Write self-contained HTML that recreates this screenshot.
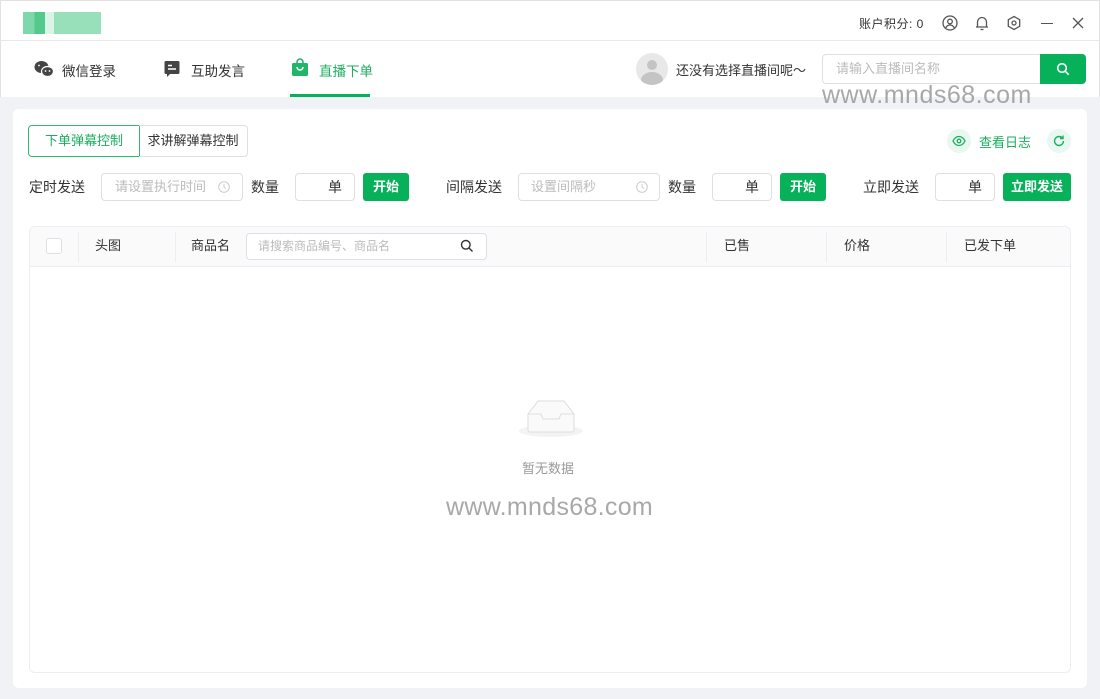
<!DOCTYPE html>
<html><head><meta charset="utf-8"><style>
*{box-sizing:border-box;margin:0;padding:0}
body{width:1100px;height:699px;overflow:hidden;font-family:"Liberation Sans","Noto Sans CJK SC",sans-serif;font-size:13px;color:#333;background:#f0f2f5;position:relative}
.abs{position:absolute}
.top{left:0;top:0;width:1100px;height:41px;background:#fff;border:1px solid #e2e2e2;border-bottom:1px solid #e8e8e8}
.nav{left:0;top:41px;width:1100px;height:56px;background:#fff;border-left:1px solid #e2e2e2;border-right:1px solid #e2e2e2}
.card{left:13px;top:109px;width:1074px;height:579px;background:#fff;border-radius:6px}
.inp{position:absolute;border:1px solid #dcdfe6;border-radius:4px;background:#fff;color:#bbb;font-size:13px;line-height:26px;height:28px}
.btn{position:absolute;background:#07b15a;color:#fff;border-radius:3px;font-weight:bold;font-size:13px;text-align:center;line-height:28px;height:28px}
.lbl{position:absolute;font-size:14px;color:#333;line-height:28px}
.th{position:absolute;top:9px;line-height:20px}
</style></head><body>
<div class="abs top">
 <div class="abs" style="left:22px;top:11px;width:78px;height:22px;background:linear-gradient(90deg,#6fd3a0 0 15%,#3ec47e 15% 28%,#d8f2e4 28% 40%,#8cdcb3 40% 100%);opacity:.9"></div>
 <div class="abs" style="left:858px;top:14px;font-size:12px;color:#333;letter-spacing:.5px">账户积分: 0</div>
 <svg class="abs" style="left:941px;top:14px" width="16" height="16" viewBox="0 0 16 16" fill="none" stroke="#555" stroke-width="1.3"><circle cx="8" cy="8" r="7"/><circle cx="8" cy="6.5" r="2.3"/><path d="M3.8 12.8c1-2 2.5-2.8 4.2-2.8s3.2.8 4.2 2.8"/></svg>
 <svg class="abs" style="left:973px;top:14px" width="16" height="16" viewBox="0 0 16 16" fill="none" stroke="#555" stroke-width="1.3"><path d="M3.5 12V7a4.5 4.5 0 019 0v5M2 12h12M6.5 14.5h3"/></svg>
 <svg class="abs" style="left:1005px;top:14px" width="16" height="16" viewBox="0 0 16 16" fill="none" stroke="#555" stroke-width="1.3"><path d="M8 1.5l5.7 3.2v6.6L8 14.5 2.3 11.3V4.7z"/><circle cx="8" cy="8" r="2"/></svg>
 <div class="abs" style="left:1040px;top:22px;width:12px;height:1.3px;background:#555"></div>
 <svg class="abs" style="left:1071px;top:16px" width="12" height="12" viewBox="0 0 12 12" stroke="#555" stroke-width="1.3"><path d="M1 1l10 10M11 1L1 11"/></svg>
</div>
<div class="abs nav">
 <svg class="abs" style="left:33px;top:19px" width="20" height="18" viewBox="0 0 20 18" fill="#444"><ellipse cx="7.5" cy="7" rx="7" ry="6"/><ellipse cx="13.5" cy="11.5" rx="6" ry="5" stroke="#fff" stroke-width="1.2"/><circle cx="11.5" cy="11" r=".9" fill="#fff"/><circle cx="15.5" cy="11" r=".9" fill="#fff"/><circle cx="5" cy="5.5" r=".9" fill="#fff"/></svg>
 <div class="abs" style="left:61px;top:19px;font-size:13.5px">微信登录</div>
 <svg class="abs" style="left:163px;top:19px" width="16" height="18" viewBox="0 0 16 18"><path d="M2 1h12a1.5 1.5 0 011.5 1.5v10A1.5 1.5 0 0114 14H6l-3 3v-3H2A1.5 1.5 0 01.5 12.5v-10A1.5 1.5 0 012 1z" fill="#444"/><path d="M4 5.5h4M4 9h8" stroke="#fff" stroke-width="1.4"/></svg>
 <div class="abs" style="left:190px;top:19px;font-size:13.5px">互助发言</div>
 <svg class="abs" style="left:291px;top:17px" width="16" height="18" viewBox="0 0 16 18"><path d="M5 5V4a3 3 0 016 0v1" fill="none" stroke="#21b66a" stroke-width="1.6"/><rect x="0" y="5" width="16" height="13" rx="1.5" fill="#21b66a"/><path d="M5 9a3 3 0 006 0" fill="none" stroke="#fff" stroke-width="1.5"/></svg>
 <div class="abs" style="left:318px;top:19px;font-size:13.5px;color:#1aae5f">直播下单</div>
 <div class="abs" style="left:289px;top:53px;width:80px;height:3px;background:#07b15a"></div>
 <div class="abs" style="left:635px;top:12px;width:32px;height:32px;border-radius:50%;background:#e8e8e8;overflow:hidden"><div class="abs" style="left:11px;top:7px;width:10px;height:10px;border-radius:50%;background:#c4c4c4"></div><div class="abs" style="left:5px;top:19px;width:22px;height:16px;border-radius:50%;background:#c4c4c4"></div></div>
 <div class="abs" style="left:675px;top:19px;font-size:13px">还没有选择直播间呢～</div>
 <div class="inp" style="left:821px;top:13px;width:220px;height:30px;line-height:28px;padding-left:13px;border-radius:4px 0 0 4px">请输入直播间名称</div>
 <div class="abs" style="left:1039px;top:13px;width:46px;height:30px;background:#07b15a;border-radius:0 4px 4px 0"><svg class="abs" style="left:16px;top:8px" width="14" height="14" viewBox="0 0 14 14" fill="none" stroke="#fff" stroke-width="1.6"><circle cx="6" cy="6" r="4.3"/><path d="M9.2 9.2l3.5 3.5"/></svg></div>
</div>
<div class="abs" style="left:822px;top:81px;font-size:25px;color:#999;opacity:.85;letter-spacing:.5px">www.mnds68.com</div>
<div class="abs card"></div>
<div class="abs" style="left:28px;top:125px;width:112px;height:32px;border:1px solid #2ebd6e;border-radius:4px 0 0 4px;color:#1aae5f;font-size:13px;line-height:30px;text-align:center">下单弹幕控制</div>
<div class="abs" style="left:139px;top:125px;width:109px;height:32px;border:1px solid #dcdfe6;border-left:none;border-radius:0 4px 4px 0;font-size:13px;line-height:30px;text-align:center">求讲解弹幕控制</div>
<div class="abs" style="left:947px;top:129px;width:24px;height:24px;border-radius:50%;background:#e8f7ef"><svg class="abs" style="left:5px;top:6px" width="14" height="12" viewBox="0 0 14 12" fill="none" stroke="#1aae5f" stroke-width="1.3"><path d="M1 6c1.5-3 3.5-4.5 6-4.5S11.5 3 13 6c-1.5 3-3.5 4.5-6 4.5S2.5 9 1 6z"/><circle cx="7" cy="6" r="1.8"/></svg></div>
<div class="abs" style="left:979px;top:132px;font-size:13px;color:#1aae5f">查看日志</div>
<div class="abs" style="left:1047px;top:129px;width:24px;height:24px;border-radius:50%;background:#e8f7ef"><svg class="abs" style="left:6px;top:6px" width="12" height="12" viewBox="0 0 12 12" fill="none" stroke="#1aae5f" stroke-width="1.4"><path d="M10.5 6A4.5 4.5 0 116 1.5c1.5 0 2.7.7 3.5 1.7M10 .5v3H7"/></svg></div>
<div class="lbl" style="left:29px;top:173px">定时发送</div>
<div class="inp" style="left:101px;top:173px;width:142px;padding-left:13px">请设置执行时间<svg style="position:absolute;left:116px;top:7px" width="12" height="12" viewBox="0 0 12 12" fill="none" stroke="#ccc"><circle cx="6" cy="6" r="5.3"/><path d="M6 3v3l2 1.5"/></svg></div>
<div class="lbl" style="left:251px;top:173px">数量</div>
<div class="inp" style="left:295px;top:173px;width:60px;color:#333;text-align:right;padding-right:12px;font-size:14px">单</div>
<div class="btn" style="left:363px;top:173px;width:46px">开始</div>
<div class="lbl" style="left:446px;top:173px">间隔发送</div>
<div class="inp" style="left:518px;top:173px;width:142px;padding-left:12px">设置间隔秒<svg style="position:absolute;left:117px;top:7px" width="12" height="12" viewBox="0 0 12 12" fill="none" stroke="#ccc"><circle cx="6" cy="6" r="5.3"/><path d="M6 3v3l2 1.5"/></svg></div>
<div class="lbl" style="left:668px;top:173px">数量</div>
<div class="inp" style="left:712px;top:173px;width:60px;color:#333;text-align:right;padding-right:12px;font-size:14px">单</div>
<div class="btn" style="left:780px;top:173px;width:46px">开始</div>
<div class="lbl" style="left:863px;top:173px">立即发送</div>
<div class="inp" style="left:935px;top:173px;width:60px;color:#333;text-align:right;padding-right:12px;font-size:14px">单</div>
<div class="btn" style="left:1003px;top:173px;width:68px">立即发送</div>
<div class="abs" style="left:29px;top:226px;width:1042px;height:447px;border:1px solid #ebeef5;border-radius:6px;overflow:hidden">
 <div class="abs" style="left:0;top:0;width:1042px;height:40px;background:#fafafa;border-bottom:1px solid #ebeef5"></div>
 <div class="abs" style="left:16px;top:11px;width:16px;height:16px;border:1px solid #dcdfe6;border-radius:3px;background:#fff"></div>
 <div class="abs" style="left:48px;top:5px;width:1px;height:30px;background:#ebeef5"></div>
 <div class="th" style="left:65px">头图</div>
 <div class="abs" style="left:145px;top:5px;width:1px;height:30px;background:#ebeef5"></div>
 <div class="th" style="left:161px">商品名</div>
 <div class="inp" style="left:216px;top:6px;width:241px;height:27px;line-height:25px;padding-left:11px;font-size:12px">请搜索商品编号、商品名<svg style="position:absolute;left:213px;top:5px" width="14" height="14" viewBox="0 0 14 14" fill="none" stroke="#333" stroke-width="1.4"><circle cx="5.8" cy="5.8" r="4.3"/><path d="M9 9l3.5 3.5"/></svg></div>
 <div class="abs" style="left:676px;top:5px;width:1px;height:30px;background:#ebeef5"></div>
 <div class="th" style="left:694px">已售</div>
 <div class="abs" style="left:796px;top:5px;width:1px;height:30px;background:#ebeef5"></div>
 <div class="th" style="left:814px">价格</div>
 <div class="abs" style="left:916px;top:5px;width:1px;height:30px;background:#ebeef5"></div>
 <div class="th" style="left:934px">已发下单</div>
 <svg class="abs" style="left:488px;top:168px" width="66" height="46" viewBox="0 0 66 46"><ellipse cx="33" cy="36" rx="32" ry="6" fill="#f3f3f3"/><path d="M10 19l10-13h26l10 13v16a2 2 0 01-2 2H12a2 2 0 01-2-2z" fill="#fafafa" stroke="#ddd"/><path d="M10 19h13l2 5h16l2-5h13" fill="none" stroke="#ddd"/></svg>
 <div class="abs" style="left:492px;top:231px;color:#999">暂无数据</div>
</div>
<div class="abs" style="left:446px;top:493px;font-size:25px;color:#999;opacity:.85;letter-spacing:.3px">www.mnds68.com</div>
</body></html>
